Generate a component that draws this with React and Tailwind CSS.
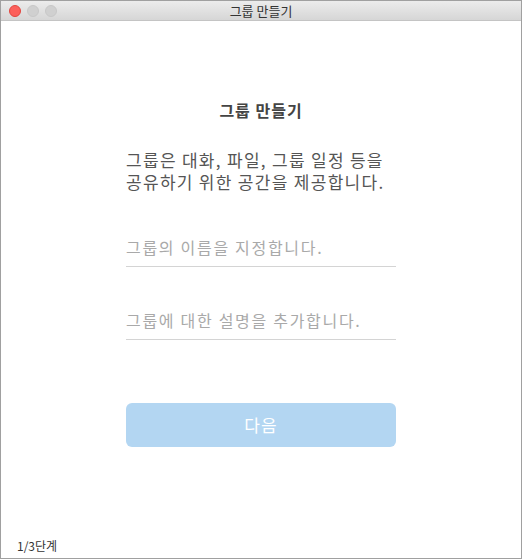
const font = { fontFamily: '"Noto Sans CJK KR", "Noto Sans", sans-serif' };

function TitleBar() {
  return (
    <div className="relative flex h-[20px] items-center border-b border-[#c4c4c4] bg-gradient-to-b from-[#ececec] to-[#d6d6d6]">
      <div className="flex items-center gap-[6px] pl-[8px]">
        <span className="h-[12px] w-[12px] rounded-full border border-[#e2463f] bg-[#fc605b]" />
        <span className="h-[12px] w-[12px] rounded-full border border-[#c8c8c8] bg-[#d0d0d0]" />
        <span className="h-[12px] w-[12px] rounded-full border border-[#c8c8c8] bg-[#d0d0d0]" />
      </div>
      <div className="absolute inset-0 flex items-center justify-center text-[13px] text-[#333]">그룹 만들기</div>
    </div>
  );
}

function Field({ placeholder }) {
  return (
    <input
      placeholder={placeholder}
      className="w-full border-b border-[#d4d4d4] bg-transparent pb-[8px] text-[16px] leading-[22px] tracking-[1.7px] text-[#444] outline-none placeholder:text-[#a9a9a9]"
      style={font}
    />
  );
}

export default function App() {
  return (
    <div className="flex h-[559px] w-[522px] flex-col border border-[#a0a0a0] bg-white" style={font}>
      <TitleBar />
      <div className="flex flex-1 flex-col">
        <div className="mx-auto flex w-[270px] flex-col pt-[79px]">
          <h1 className="text-center text-[16px] font-bold leading-[20px] tracking-[1px] text-[#444]">그룹 만들기</h1>
          <p className="mt-[29px] whitespace-nowrap text-[17px] leading-[22px] tracking-[1.3px] text-[#555]">
            그룹은 대화, 파일, 그룹 일정 등을
            <br />
            공유하기 위한 공간을 제공합니다.
          </p>
          <div className="mt-[42px]">
            <Field placeholder="그룹의 이름을 지정합니다." />
          </div>
          <div className="mt-[41px]">
            <Field placeholder="그룹에 대한 설명을 추가합니다." />
          </div>
          <button className="mt-[63px] h-[44px] w-full rounded-[6px] bg-[#b3d6f2] text-[17px] tracking-[1px] text-white">다음</button>
        </div>
        <div className="mt-auto pb-[3px] pl-[16px] text-[12px] text-[#333]">1/3단계</div>
      </div>
    </div>
  );
}
